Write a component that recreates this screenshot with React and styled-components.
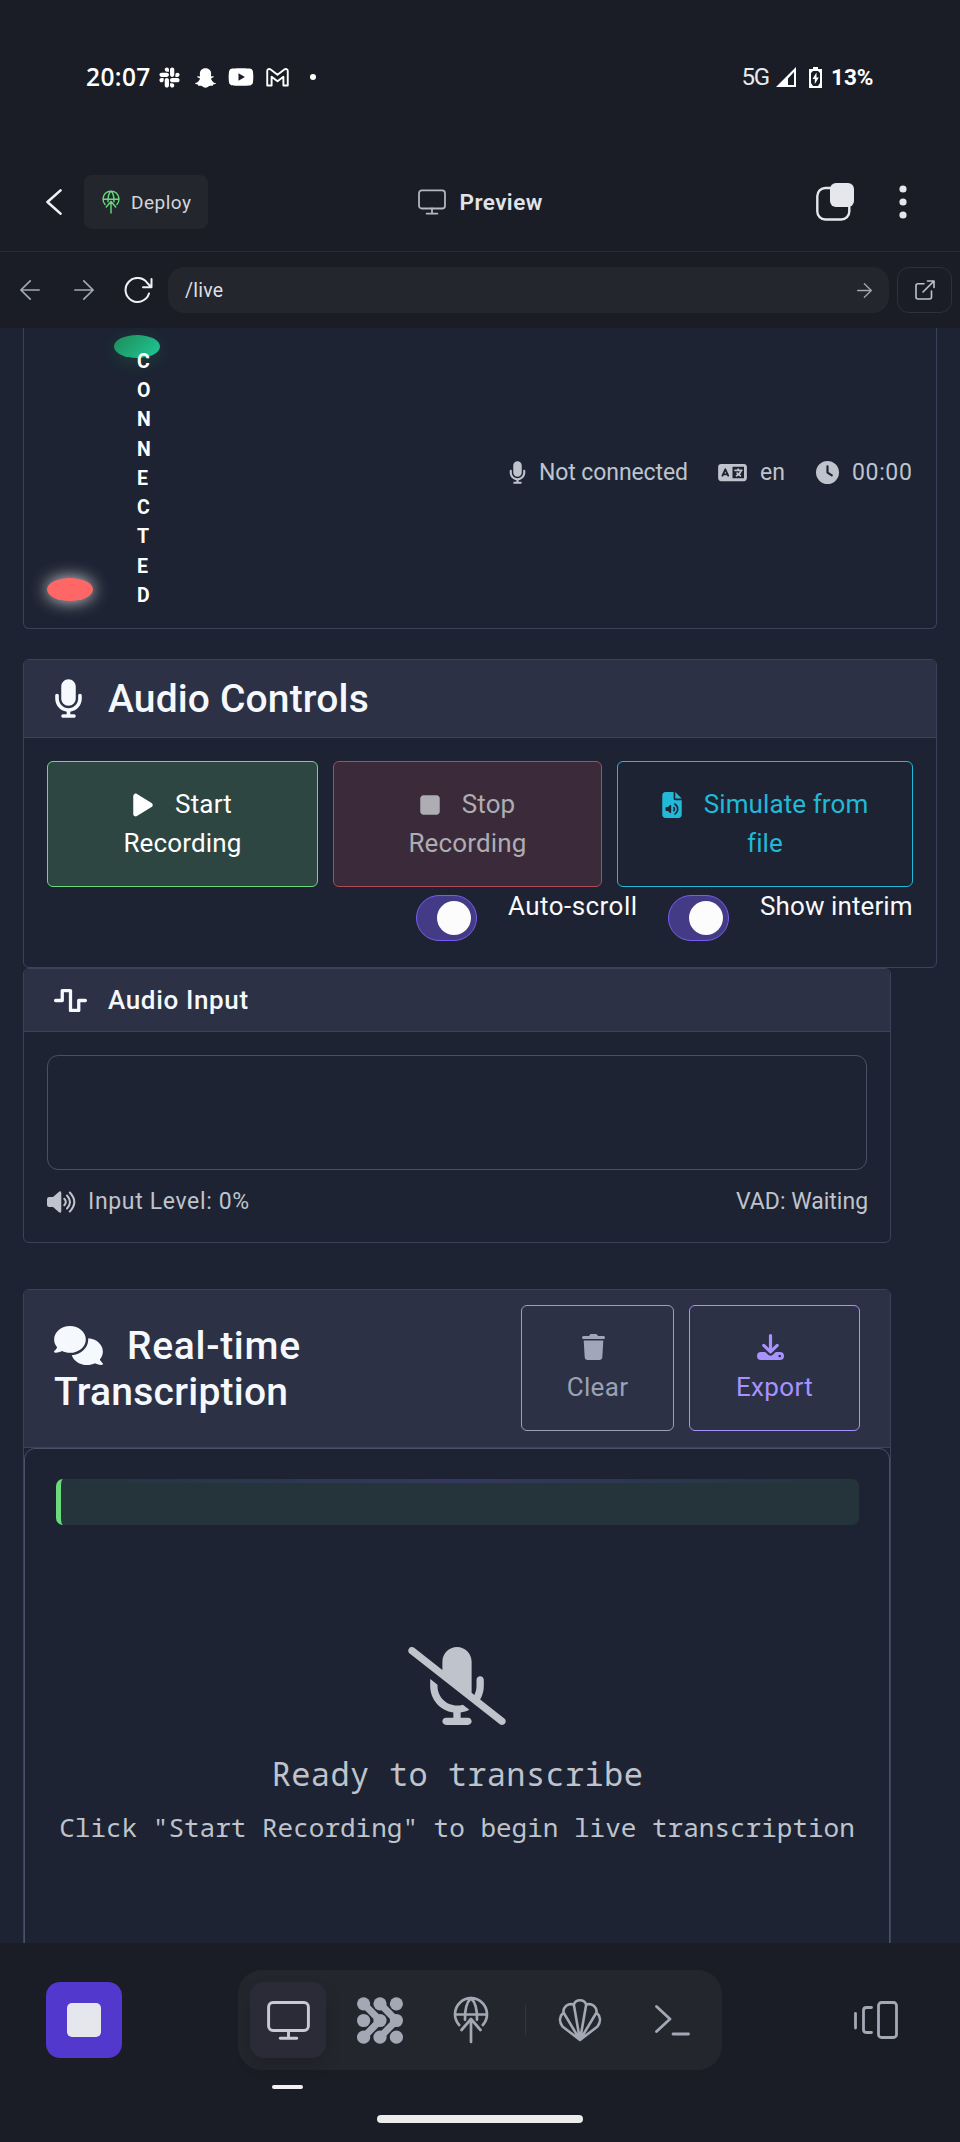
import React from "react";
import styled, { createGlobalStyle } from "styled-components";
import {
  FaClock,
  FaComments,
  FaFileAudio,
  FaLanguage,
  FaMicrophone,
  FaMicrophoneSlash,
  FaPlay,
  FaSlack,
  FaStop,
  FaWaveSquare,
  FaYoutube,
} from "react-icons/fa6";
import { RiSnapchatFill } from "react-icons/ri";

const chrome = "#1a1d25";
const surface = "#24262e";
const page = "#1d2332";
const line = "#3a435a";
const muted = "#a3a8b4";
const soft = "#bfc3cc";

const GlobalStyle = createGlobalStyle`
  * { box-sizing: border-box; }
  body { margin: 0; background: ${chrome}; font-family: Roboto, "Liberation Sans", sans-serif; }
  svg { display: block; flex: none; }
`;

const Screen = styled.div`
  width: 960px;
  height: 2142px;
  overflow: hidden;
  display: flex;
  flex-direction: column;
  background: ${chrome};
`;

/* Box for icon-font glyphs whose width differs from their height. */
const Glyph = styled.span`
  flex: none;
  display: block;
  width: ${(p) => p.$w}px;
  height: ${(p) => p.$h}px;
  svg { width: 100%; height: 100%; }
`;

/* ---------- system status bar ---------- */

const StatusBar = styled.div`
  height: 112px;
  padding: 43px 87px 0 86px;
  display: flex;
  justify-content: space-between;
  color: #fff;
`;

const StatusGroup = styled.div`
  height: 68px;
  display: flex;
  align-items: center;
`;

const Clock = styled.span`
  width: 64px;
  margin-right: 8px;
  font: 600 24.5px/30px "Open Sans", sans-serif;
  letter-spacing: 0.4px;
  white-space: nowrap;
`;

const StatusIcon = styled.span`
  width: ${(p) => p.$w}px;
  display: flex;
`;

const Dot = styled.span`
  width: 6px;
  height: 6px;
  border-radius: 50%;
  background: #fff;
`;

const Network = styled.span`
  font-size: 24px;
  line-height: 30px;
  letter-spacing: -1.2px;
  color: #e8e9ec;
  margin-right: 7px;
`;

const BatterySlot = styled.span`
  padding: 0 9px 0 13px;
`;

const Percent = styled.span`
  font: 700 22.5px/30px Roboto, sans-serif;
  width: 42px;
  white-space: nowrap;
`;

/* ---------- app header ---------- */

const Header = styled.header`
  height: 140px;
  padding: 63px 53px 22px 46px;
  border-bottom: 1px solid #262938;
  display: grid;
  grid-template-columns: 1fr auto 1fr;
  align-items: center;
`;

const HeaderSide = styled.div`
  display: flex;
  align-items: center;
  justify-content: ${(p) => (p.$end ? "flex-end" : "flex-start")};
  gap: ${(p) => (p.$end ? "45px" : "22px")};
`;

const DeployButton = styled.div`
  width: 124px;
  height: 54px;
  padding-left: 18px;
  display: flex;
  align-items: center;
  gap: 11px;
  border-radius: 8px;
  background: ${surface};
  color: #d3d5db;
  font-size: 19px;
  letter-spacing: 0.5px;
`;

const HeaderTitle = styled.div`
  width: 136px;
  padding-left: 9px;
  display: flex;
  align-items: center;
  gap: 14px;
  color: #e1e3ea;
  font-size: 22.5px;
  font-weight: 600;
  letter-spacing: 0.45px;
  white-space: nowrap;
`;

/* ---------- address row ---------- */

const AddressRow = styled.div`
  height: 76px;
  padding: 0 8px 0 20px;
  display: flex;
  align-items: center;
`;

const NavIcons = styled.div`
  width: 148px;
  display: flex;
  align-items: center;
`;

const NavIcon = styled.span`
  width: ${(p) => p.$w}px;
`;

const AddressBar = styled.div`
  width: 721px;
  height: 46px;
  padding: 0 17px;
  display: flex;
  align-items: center;
  justify-content: space-between;
  border-radius: 16px;
  background: ${surface};
  color: #dddfe5;
  font-size: 19.5px;
  line-height: 23px;
  letter-spacing: 0.2px;
`;

const OpenButton = styled.div`
  width: 55px;
  height: 46px;
  margin-left: 8px;
  display: flex;
  align-items: center;
  justify-content: center;
  border: 1px solid #2e303e;
  border-radius: 12px;
`;

/* ---------- live page ---------- */

const Viewport = styled.main`
  height: 1615px;
  flex: none;
  overflow: hidden;
  padding-left: 23px;
  background: ${page};
`;

const Card = styled.section`
  width: ${(p) => p.$width}px;
  height: ${(p) => p.$height}px;
  margin-bottom: ${(p) => p.$gap || 0}px;
  border: 1px solid ${line};
  border-radius: 6px;
  overflow: hidden;
`;

const StatusCard = styled(Card)`
  border-top: 0;
  border-radius: 0 0 6px 6px;
  padding: 0 23px;
  display: flex;
  justify-content: space-between;
`;

const Lamps = styled.div`
  display: flex;
  align-items: flex-end;
`;

const RedLamp = styled.div`
  width: 46px;
  height: 23px;
  margin: 0 21px 27px 0;
  border-radius: 50%;
  background: #ff6666;
  box-shadow: 0 0 17px rgba(255, 255, 255, 0.85);
`;

const Connection = styled.div`
  width: 46px;
  padding: 7px 0 18px;
`;

const GreenLamp = styled.div`
  height: 23px;
  margin-bottom: -11px;
  border-radius: 50%;
  background: linear-gradient(135deg, #1e8b58, #20c997);
  box-shadow: 0 4px 17px rgba(32, 180, 120, 0.2);
`;

const Letters = styled.div`
  position: relative;
  padding-left: 23px;
  display: flex;
  flex-direction: column;
  color: #fff;
  font-size: 19.5px;
  font-weight: 700;
  line-height: 29.25px;
`;

const Stats = styled.div`
  height: 289px;
  display: flex;
  align-items: center;
`;

const Stat = styled.div`
  width: ${(p) => p.$width}px;
  display: flex;
  align-items: center;
  gap: ${(p) => p.$gap}px;
  color: ${soft};
  font-size: 23px;
  line-height: 34px;
  letter-spacing: ${(p) => p.$track}px;
  white-space: nowrap;
`;

const CardHeader = styled.div`
  height: ${(p) => p.$height}px;
  padding: 0 30px;
  display: flex;
  align-items: center;
  justify-content: space-between;
  background: #2c3145;
  border-bottom: 1px solid ${line};
`;

const Title = styled.h2`
  margin: 0;
  display: flex;
  align-items: center;
  color: #f5f8fc;
  font-size: ${(p) => (p.$small ? 26 : 39)}px;
  line-height: 46px;
  font-weight: 500;
  letter-spacing: ${(p) => (p.$small ? 0.65 : 0.15)}px;
  white-space: nowrap;
`;

const TitleIcon = styled.span`
  width: 54px;
`;

const WrappedTitle = styled(Title)`
  display: block;
`;

const TitleLine = styled.span`
  height: 46px;
  display: flex;
  align-items: center;
  gap: 24px;
  letter-spacing: ${(p) => p.$track}px;
`;

const Controls = styled.div`
  padding: 23px 23px 0;
`;

const ButtonRow = styled.div`
  display: flex;
  gap: 15px;
`;

const tones = {
  green: ["#69db7c", "#2d4642", "#fff"],
  red: ["#b04a55", "#3b2a39", "#adadb3"],
  cyan: ["#22b8d8", "transparent", "#22b8d8"],
  gray: ["#9aa1b5", "transparent", "#9aa1b5"],
  violet: ["#a792ff", "transparent", "#a792ff"],
};

const ActionButton = styled.div`
  width: ${(p) => p.$width}px;
  height: 126px;
  padding-top: 23px;
  border: 1px solid ${(p) => tones[p.$tone][0]};
  border-radius: 6px;
  background: ${(p) => tones[p.$tone][1]};
  color: ${(p) => tones[p.$tone][2]};
  font-size: 26px;
  line-height: 39px;
  letter-spacing: ${(p) => p.$track}px;
  white-space: nowrap;
  display: flex;
  flex-direction: column;
  align-items: center;
`;

const ButtonLine = styled.span`
  height: 39px;
  display: flex;
  align-items: center;
  gap: 22px;
`;

const ButtonIcon = styled(ButtonLine)`
  padding: 0 8px 3px 0;
`;

const Switches = styled.div`
  height: 54px;
  padding-top: 8px;
  display: flex;
  justify-content: flex-end;
  align-items: flex-start;
`;

const Toggle = styled.span`
  width: 61px;
  height: 46px;
  padding: 5px;
  display: flex;
  justify-content: flex-end;
  border: 1px solid #7a5cf5;
  border-radius: 23px;
  background: #443b86;
`;

const Knob = styled.span`
  width: 34px;
  height: 34px;
  border-radius: 50%;
  background: #fcfcfc;
`;

const ToggleLabel = styled.span`
  width: ${(p) => p.$width}px;
  margin-left: 31px;
  margin-right: ${(p) => p.$right || 0}px;
  margin-top: -8px;
  color: #f8f9fb;
  font-size: 26px;
  line-height: 39px;
  letter-spacing: ${(p) => p.$track}px;
  white-space: nowrap;
`;

const Waveform = styled.div`
  height: 115px;
  margin: 23px 23px 0;
  border: 1px solid #4a5064;
  border-radius: 11px;
`;

const Levels = styled.div`
  padding: 15px 23px 0;
  display: flex;
  justify-content: space-between;
`;

const HeaderButtons = styled.div`
  display: flex;
  gap: 15px;
  margin-bottom: 1px;
`;

const Transcript = styled.div`
  height: 600px;
  padding: 30px 30px 0 31px;
  border: 1px solid #4a5168;
  border-radius: 11px;
  display: flex;
  flex-direction: column;
  align-items: center;
  color: ${soft};
`;

const Partial = styled.div`
  align-self: stretch;
  height: 46px;
  margin-bottom: 122px;
  border-left: 5px solid #69db7c;
  border-radius: 7px;
  background: linear-gradient(90deg, transparent, rgba(74, 62, 150, 0.4) 50%, transparent) top / 100% 4px no-repeat, #25343b;
`;

const SlashedMic = styled(Glyph)`
  margin-right: 2px;
`;

const Ready = styled.div`
  margin-top: 25px;
  font-family: "Noto Sans Mono", "DejaVu Sans Mono", monospace;
  font-size: 32px;
  line-height: 48px;
  letter-spacing: 0.35px;
  white-space: pre;
`;

const Hint = styled(Ready)`
  margin: 10px 1px 0 0;
  font-size: 26px;
  line-height: 39px;
  letter-spacing: 0;
`;

/* ---------- bottom dock ---------- */

const BottomBar = styled.footer`
  height: 127px;
  flex: none;
  padding: 27px 62px 0 46px;
  display: flex;
  align-items: center;
  justify-content: space-between;
`;

const StopButton = styled.div`
  width: 76px;
  height: 76px;
  display: flex;
  align-items: center;
  justify-content: center;
  border-radius: 14px;
  background: #5238cc;
`;

const StopSquare = styled.span`
  width: 34px;
  height: 34px;
  border-radius: 5px;
  background: #e6e7ed;
`;

const Dock = styled.nav`
  width: 484px;
  height: 100px;
  margin-left: -16px;
  padding: 12px;
  display: flex;
  align-items: center;
  border-radius: 24px;
  background: ${surface};
`;

const DockItem = styled.span`
  width: 76px;
  height: 76px;
  margin-right: ${(p) => p.$right || 0}px;
  display: flex;
  align-items: center;
  justify-content: center;
  border-radius: 14px;
  background: ${(p) => (p.$active ? "#2a2b36" : "transparent")};
  box-shadow: ${(p) => (p.$active ? "0 8px 16px rgba(0, 0, 0, 0.14)" : "none")};
`;

const DockDivider = styled.span`
  width: 1px;
  height: 30px;
  margin-right: 16px;
  background: #343642;
`;

const Marks = styled.div`
  padding: 15px 0 0;
  display: flex;
  flex-direction: column;
  align-items: center;
`;

const ActiveMark = styled.span`
  align-self: flex-start;
  width: 31px;
  height: 4px;
  margin: 0 0 26px 272px;
  border-radius: 2px;
  background: #f2f2f5;
`;

const HomeBar = styled.span`
  width: 206px;
  height: 8px;
  border-radius: 4px;
  background: #ececec;
`;

/* ---------- drawings ---------- */

const Stroke = ({ w, h, box, width = 2, color = muted, children }) => (
  <svg width={w} height={h} viewBox={box} fill="none" stroke={color} strokeWidth={width} strokeLinecap="round" strokeLinejoin="round">
    {children}
  </svg>
);

const MonitorIcon = ({ w, h, width, color }) => (
  <Stroke w={w} h={h} box="0 0 44 40" width={width} color={color}>
    <rect x="1.6" y="1.6" width="40.8" height="28.6" rx="4.5" />
    <path d="M22 30.2v7.8M13.5 38.2h17" />
  </Stroke>
);

const GlobeUpIcon = ({ w, h, width, color }) => (
  <Stroke w={w} h={h} box="0 0 36 48" width={width} color={color}>
    <path d="M6.2 29A16 16 0 1 1 29.8 29M2 18.5h32M18 2.2c-4.5 4-6.3 10-6 21.500M18 2.2c4.5 4 6.3 10 6 21.500" />
    <path d="M18 46V23M8.5 34 18 23l9.5 11" />
  </Stroke>
);

const Arrow = ({ w, left }) => (
  <Stroke w={w} h={w} box="0 0 20 20" width={1.7}>
    <path d={left ? "M19.2 10H.9M10.2.9.9 10l9.3 9.1" : "M.8 10h18.3M9.8.9l9.3 9.1-9.3 9.1"} />
  </Stroke>
);

const GmailIcon = () => (
  <Stroke w={23} h={19} box="0 0 24 20" width={2} color="#fff">
    <path d="M1.2 3.2v15.2h4.6V9.2L12 14l6.2-4.8v9.2h4.6V3.2c0-2.1-2.1-2.7-3.6-1.6L12 7.2 4.8 1.6C3.3.5 1.2 1.1 1.2 3.2z" />
  </Stroke>
);

const SignalIcon = () => (
  <svg width="20" height="20" viewBox="0 0 20 20">
    <path fillRule="evenodd" d="M20 0v20H0zM18 5l-6 6.5V18h6z" fill="#fff" />
  </svg>
);

const BatteryIcon = () => (
  <svg width="13" height="21" viewBox="0 0 13 21">
    <path d="M4 0h5v2h4v19H0V2h4zM2 6v10l2 3h5l2-3V6L9 4H4z" fill="#fff" fillRule="evenodd" />
    <path d="M7.5 5.5 3.5 12h2.3v5l4-6.5H7.5z" fill="#fff" />
  </svg>
);

const VolumeIcon = () => (
  <svg width="29" height="22" viewBox="0 0 29 22">
    <path d="M0 8.2Q0 6 2.2 6H6L12 .7Q14.3-.5 14.3 2v18q0 2.5-2.3 1.3L6 16H2.2Q0 16 0 13.8z" fill={soft} />
    <path d="M17.3 7.8q3 3.2 0 6.4M20 4.5q6 6.5 0 13M22.8 1.5q9 9.5 0 19" fill="none" stroke={soft} strokeWidth="2" strokeLinecap="round" />
  </svg>
);

const TrashIcon = () => (
  <svg width="23" height="26" viewBox="0 0 23 26" fill="#a0a7bb">
    <path d="M7 2 8 .6Q8.4 0 9 0h5q.6 0 1 .6L16 2h5.5Q23 2 23 3.5T21.5 5h-20Q0 5 0 3.5T1.5 2zM1.7 6.6h19.6l-1 17Q20.1 26 17.8 26H5.2Q2.9 26 2.7 23.6z" />
  </svg>
);

const ExportIcon = () => (
  <svg width="27" height="26" viewBox="0 0 27 26">
    <path d="M13.5 1.6v16M6.8 11.4l6.7 6.5 6.7-6.5" fill="none" stroke="#a792ff" strokeWidth="3.2" strokeLinecap="round" strokeLinejoin="round" />
    <path fillRule="evenodd" d="M4 18h4.2l3.3 3q2 1.6 4 0l3.3-3H23q4 0 4 4t-4 4H4q-4 0-4-4t4-4zM22.7 20.7a1.3 1.3 0 1 0 .01 0z" fill="#a792ff" />
  </svg>
);

const DotsGridIcon = () => (
  <svg width="46" height="47" viewBox="0 0 46 47" fill={muted}>
    {[6.8, 23.5, 40.2].map((y) => [6.6, 23, 39.4].map((x) => <circle key={`${x}-${y}`} cx={x} cy={y} r="6.6" />))}
    <path d="M6.6 6.8 23 23.5 6.6 40.2M23 6.8 39.4 23.5 23 40.2" fill="none" stroke={muted} strokeWidth="7" />
  </svg>
);

const ShellIcon = () => (
  <Stroke w={44} h={44} box="0 0 44 44" width={2.6}>
    <path d="M22 42 4.5 28.5C.8 23.5 1.5 18 5.5 14.5 5 8.5 10 5 15.8 6.5 18 .8 26 .8 28.2 6.5 34 5 39 8.5 38.5 14.5c4 3.5 4.7 9 1 14zM22 42 5.5 14.5M22 42 15.8 6.5M22 42l6.2-35.5M22 42l16.500-27.500" />
  </Stroke>
);

/* ---------- app ---------- */

export default function App() {
  return (
    <Screen>
      <GlobalStyle />
      <StatusBar>
        <StatusGroup>
          <Clock>20:07</Clock>
          <StatusIcon $w={35}><FaSlack size={23} /></StatusIcon>
          <StatusIcon $w={35}><RiSnapchatFill size={25} /></StatusIcon>
          <StatusIcon $w={38}><FaYoutube size={26} /></StatusIcon>
          <StatusIcon $w={44}><GmailIcon /></StatusIcon>
          <Dot />
        </StatusGroup>
        <StatusGroup>
          <Network>5G</Network>
          <SignalIcon />
          <BatterySlot><BatteryIcon /></BatterySlot>
          <Percent>13%</Percent>
        </StatusGroup>
      </StatusBar>

      <Header>
        <HeaderSide>
          <Stroke w={16} h={26} box="0 0 16 26" width={2.6} color="#f0f1f5">
            <path d="M14.5 1.4 1.5 13l13 11.6" />
          </Stroke>
          <DeployButton>
            <GlobeUpIcon w={18} h={24} width={2.8} color="#69db7c" />
            Deploy
          </DeployButton>
        </HeaderSide>
        <HeaderTitle>
          <MonitorIcon w={28} h={26} width={2.8} color="#b4b7c0" />
          Preview
        </HeaderTitle>
        <HeaderSide $end>
          <svg width="38" height="38" viewBox="0 0 38 38">
            <rect x="1.3" y="5" width="32" height="31.5" rx="8" fill="none" stroke="#e6e7ed" strokeWidth="2.4" />
            <rect x="14" y="0" width="24" height="24" rx="6" fill="#e6e7ed" />
          </svg>
          <svg width="8" height="34" viewBox="0 0 8 34" fill="#e6e7ed">
            <circle cx="4" cy="4" r="3.6" />
            <circle cx="4" cy="17" r="3.6" />
            <circle cx="4" cy="30" r="3.6" />
          </svg>
        </HeaderSide>
      </Header>

      <AddressRow>
        <NavIcons>
          <NavIcon $w={54}><Arrow w={20} left /></NavIcon>
          <NavIcon $w={50}><Arrow w={20} /></NavIcon>
          <Stroke w={29} h={27} box="0 0 29 27" width={2} color="#f0f1f5">
            <path d="M25 16.5A12 12 0 1 1 23.5 6.2L27 9.8M27.5 2v8.2h-8.5" />
          </Stroke>
        </NavIcons>
        <AddressBar>
          /live
          <Arrow w={15} />
        </AddressBar>
        <OpenButton>
          <Stroke w={20} h={20} box="0 0 20 20" width={1.6} color={soft}>
            <path d="M9 3.8H3Q1 3.8 1 5.8V17q0 2 2 2h11.5q2 0 2-2v-6M12.5 1H19v6.5M19 1 8 12" />
          </Stroke>
        </OpenButton>
      </AddressRow>

      <Viewport>
        <StatusCard $width={914} $height={301} $gap={30}>
          <Lamps>
            <RedLamp />
            <Connection>
              <GreenLamp />
              <Letters>
                {"CONNECTED".split("").map((letter, i) => <span key={i}>{letter}</span>)}
              </Letters>
            </Connection>
          </Lamps>
          <Stats>
            <Stat $width={209} $gap={13} $track={-0.1}>
              <Glyph $w={17} $h={23}><FaMicrophone /></Glyph>
              Not connected
            </Stat>
            <Stat $width={98} $gap={13} $track={0}>
              <Glyph $w={29} $h={23}><FaLanguage /></Glyph>
              en
            </Stat>
            <Stat $width={97} $gap={13} $track={0.65}>
              <FaClock size={23} />
              00:00
            </Stat>
          </Stats>
        </StatusCard>

        <Card $width={914} $height={309}>
          <CardHeader $height={78}>
            <Title>
              <TitleIcon><Glyph $w={29} $h={39}><FaMicrophone /></Glyph></TitleIcon>
              Audio Controls
            </Title>
          </CardHeader>
          <Controls>
            <ButtonRow>
              <ActionButton $width={271} $tone="green" $track={0.15}>
                <ButtonLine><Glyph $w={20} $h={26}><FaPlay /></Glyph>Start</ButtonLine>
                <ButtonLine>Recording</ButtonLine>
              </ActionButton>
              <ActionButton $width={269} $tone="red" $track={0.15}>
                <ButtonLine><Glyph $w={20} $h={26}><FaStop /></Glyph>Stop</ButtonLine>
                <ButtonLine>Recording</ButtonLine>
              </ActionButton>
              <ActionButton $width={296} $tone="cyan" $track={0.1}>
                <ButtonLine><Glyph $w={20} $h={26}><FaFileAudio /></Glyph>Simulate from</ButtonLine>
                <ButtonLine>file</ButtonLine>
              </ActionButton>
            </ButtonRow>
            <Switches>
              <Toggle><Knob /></Toggle>
              <ToggleLabel $width={129} $right={31} $track={0.45}>Auto-scroll</ToggleLabel>
              <Toggle><Knob /></Toggle>
              <ToggleLabel $width={153} $track={0.1}>Show interim</ToggleLabel>
            </Switches>
          </Controls>
        </Card>

        <Card $width={868} $height={275} $gap={46}>
          <CardHeader $height={63}>
            <Title $small>
              <TitleIcon><FaWaveSquare size={33} /></TitleIcon>
              Audio Input
            </Title>
          </CardHeader>
          <Waveform />
          <Levels>
            <Stat $gap={12} $width={200} $track={0.65}><VolumeIcon />Input Level: 0%</Stat>
            <Stat $gap={0} $width={131} $track={0}>VAD: Waiting</Stat>
          </Levels>
        </Card>

        <Card $width={868} $height={760}>
          <CardHeader $height={158}>
            <WrappedTitle>
              <TitleLine $track={0.7}><Glyph $w={49} $h={39}><FaComments /></Glyph>Real-time</TitleLine>
              <TitleLine $track={0.25}>Transcription</TitleLine>
            </WrappedTitle>
            <HeaderButtons>
              <ActionButton $width={153} $tone="gray" $track={0.35}>
                <ButtonIcon><TrashIcon /></ButtonIcon>
                <ButtonLine>Clear</ButtonLine>
              </ActionButton>
              <ActionButton $width={171} $tone="violet" $track={0.35}>
                <ButtonIcon><ExportIcon /></ButtonIcon>
                <ButtonLine>Export</ButtonLine>
              </ActionButton>
            </HeaderButtons>
          </CardHeader>
          <Transcript>
            <Partial />
            <SlashedMic $w={98} $h={78}><FaMicrophoneSlash /></SlashedMic>
            <Ready>Ready to transcribe</Ready>
            <Hint>Click "Start Recording" to begin live transcription</Hint>
          </Transcript>
        </Card>
      </Viewport>

      <BottomBar>
        <StopButton><StopSquare /></StopButton>
        <Dock>
          <DockItem $active $right={16}><MonitorIcon w={43} h={39} width={3} color="#c8cad2" /></DockItem>
          <DockItem $right={15}><DotsGridIcon /></DockItem>
          <DockItem $right={16}><GlobeUpIcon w={36} h={48} width={2.7} /></DockItem>
          <DockDivider />
          <DockItem $right={16}><ShellIcon /></DockItem>
          <DockItem>
            <Stroke w={35} h={31} box="0 0 35 31" width={2.8}>
              <path d="M1.5 1.5 15 14 1.5 26.5M18 29h15.5" />
            </Stroke>
          </DockItem>
        </Dock>
        <Stroke w={44} h={38} box="0 0 44 38" width={2.8}>
          <rect x="24.5" y="1.5" width="18" height="35" rx="3" />
          <path d="M17.5 6.5h-5q-3 0-3 3v19q0 3 3 3h5M1.5 12.5v14.5" />
        </Stroke>
      </BottomBar>
      <Marks>
        <ActiveMark />
        <HomeBar />
      </Marks>
    </Screen>
  );
}
